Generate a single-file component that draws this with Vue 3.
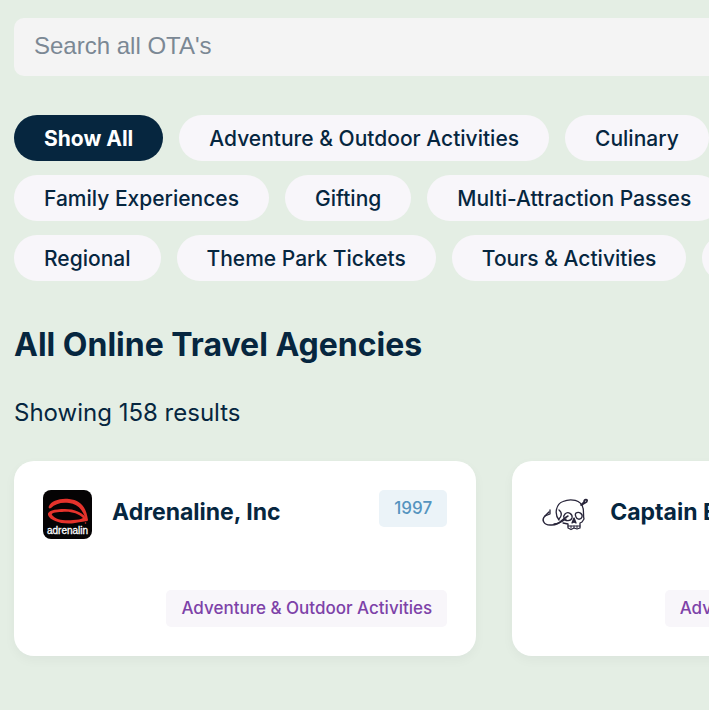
<template>
  <main class="directory">
    <input
      v-model="search"
      class="search"
      type="search"
      placeholder="Search all OTA's"
      aria-label="Search all OTA's"
    />

    <nav class="filters" aria-label="Categories">
      <div v-for="(row, i) in categoryRows" :key="i" class="filter-row">
        <button
          v-for="category in row"
          :key="category"
          type="button"
          class="pill"
          :class="{ active: category === selected }"
          :aria-pressed="category === selected"
          @click="selected = category"
        >
          {{ category }}
        </button>
      </div>
    </nav>

    <h1 class="title">All Online Travel Agencies</h1>
    <p class="count">Showing 158 results</p>

    <section class="cards">
      <article v-for="agency in agencies" :key="agency.name" class="card">
        <header class="card-header">
          <svg v-if="agency.logo === 'adrenalin'" class="logo" viewBox="0 0 50 50" aria-hidden="true">
            <rect width="49" height="49" rx="8" fill="#050304" />
            <g fill="#e5322b">
              <path d="M6 16C8 11 17 8 26 9C37 10 43 16 45 30L43 30C40 20 35 14 26 13C18 12 12 14 8 18C6 19 5 18 6 16Z" />
              <path fill-rule="evenodd" d="M45 31C41 22 31 19 22 19C11 19 4 21 5 25C7 31 20 35 32 33C38 32 42 31 45 31ZM40 28C35 23 27 21 19 22C12 22 8 23 9 25C13 30 22 31 30 30C35 30 38 29 40 28Z" />
              <circle cx="42.500" cy="33" r="0.800" />
            </g>
            <text x="24.500" y="44" class="logo-text">adrenalin</text>
          </svg>
          <svg v-else class="logo" viewBox="0 0 50 50" aria-hidden="true">
            <g fill="none" stroke="#28253a" stroke-width="1.300" stroke-linecap="round" stroke-linejoin="round">
              <path d="M18 30C13 24 15 14 22 11.500C30 8 40 10 42 18C43 21 42 25 43 29L41 32L39 33V38L36 39L33 38L30 39.500L27 38V34L22 33" />
              <path d="M40 15L43 12C43 9 47 9 46 11C46 13 43 12 41 15" stroke-width="1.700" />
              <path d="M8 22L4 26C0 30 3 35 9 35C18 36 21 29 27 26" stroke-width="1.500" />
              <path d="M4 26L9 24V20M13 34C18 34 22 31 25 29" />
              <path d="M18 20C22 23 20 27 18 29M24 24C27 21 32 24 31 28C30 31 24 32 23 28C22 26 23 25 24 24Z" />
              <path d="M35 23C38 21 42 24 41 27C40 30 36 30 35 27C34 25 34 24 35 23Z" />
              <path d="M33 28L31 33L33 32L35 33L33 28Z" fill="#28253a" />
              <path d="M27 36H39M30 36V38M33 36V38M36 36V38" stroke-width="1" />
            </g>
          </svg>
          <h2 class="name">{{ agency.name }}</h2>
          <span class="year">{{ agency.year }}</span>
        </header>
        <footer class="card-footer">
          <span class="tag">{{ agency.category }}</span>
        </footer>
      </article>
    </section>
  </main>
</template>

<script setup>
import { ref } from 'vue'

const search = ref('')
const selected = ref('Show All')

const categoryRows = [
  ['Show All', 'Adventure & Outdoor Activities', 'Culinary'],
  ['Family Experiences', 'Gifting', 'Multi-Attraction Passes'],
  ['Regional', 'Theme Park Tickets', 'Tours & Activities', 'Wellness']
]

const agencies = [
  { name: 'Adrenaline, Inc', year: 1997, category: 'Adventure & Outdoor Activities', logo: 'adrenalin' },
  { name: 'Captain Experiences', year: 2019, category: 'Adventure & Outdoor Activities', logo: 'captain' }
]
</script>

<style>
body {
  margin: 0;
  background: #e4eee4;
}
</style>

<style scoped>
.directory {
  box-sizing: border-box;
  min-height: 100vh;
  padding: 18px 0 54px 14px;
  overflow: hidden;
  background: #e4eee4;
  color: #06263f;
  font-family: Inter, "Liberation Sans", sans-serif;
}

.search {
  display: block;
  box-sizing: border-box;
  width: 100%;
  height: 58px;
  padding: 0 20px 2px;
  border: none;
  border-radius: 10px 0 0 10px;
  outline: none;
  appearance: none;
  background: #f4f4f4;
  color: #06263f;
  font-family: "Liberation Sans", Arial, sans-serif;
  font-size: 24px;
}

.search::placeholder {
  color: #7b8894;
}

.filters {
  display: flex;
  flex-direction: column;
  gap: 14px;
  margin-top: 39px;
}

.filter-row {
  display: flex;
  gap: 16px;
}

.pill {
  flex: none;
  height: 46px;
  padding: 0 30px;
  border: none;
  border-radius: 23px;
  background: #f8f6fa;
  color: #06263f;
  font-family: inherit;
  font-size: 21px;
  font-weight: 500;
  white-space: nowrap;
  cursor: pointer;
}

.pill.active {
  background: #06263f;
  color: #fff;
  font-weight: 700;
}

.title {
  margin: 42px 0 0;
  font-size: 32px;
  font-weight: 700;
  line-height: 44px;
}

.count {
  margin: 30px 0 0;
  font-size: 24px;
  line-height: 32px;
}

.cards {
  display: grid;
  grid-auto-flow: column;
  grid-auto-columns: 66.5%;
  gap: 36px;
  margin-top: 32px;
}

.card {
  display: flex;
  flex-direction: column;
  justify-content: space-between;
  gap: 50px;
  box-sizing: border-box;
  padding: 29px;
  border-radius: 20px;
  background: #fff;
  box-shadow: 0 4px 12px rgba(6, 38, 63, 0.04);
}

.card-header {
  display: flex;
  align-items: flex-start;
}

.logo {
  flex: none;
  width: 50px;
  height: 50px;
}

.logo-text {
  fill: #fff;
  stroke: #fff;
  stroke-width: 0.3px;
  font-family: "Liberation Sans", Arial, sans-serif;
  font-size: 10px;
  text-anchor: middle;
}

.name {
  flex: 1;
  margin: 6px 0 0 19px;
  font-size: 23px;
  font-weight: 700;
  line-height: 32px;
  white-space: nowrap;
}

.year,
.tag {
  padding: 0 15px;
  border-radius: 5px;
  font-size: 17px;
  font-weight: 500;
  line-height: 37px;
  white-space: nowrap;
}

.year {
  background: #ebf3f8;
  color: #5594bf;
}

.card-footer {
  display: flex;
  justify-content: flex-end;
}

.tag {
  background: #f8f6fa;
  color: #7d42a8;
}
</style>
